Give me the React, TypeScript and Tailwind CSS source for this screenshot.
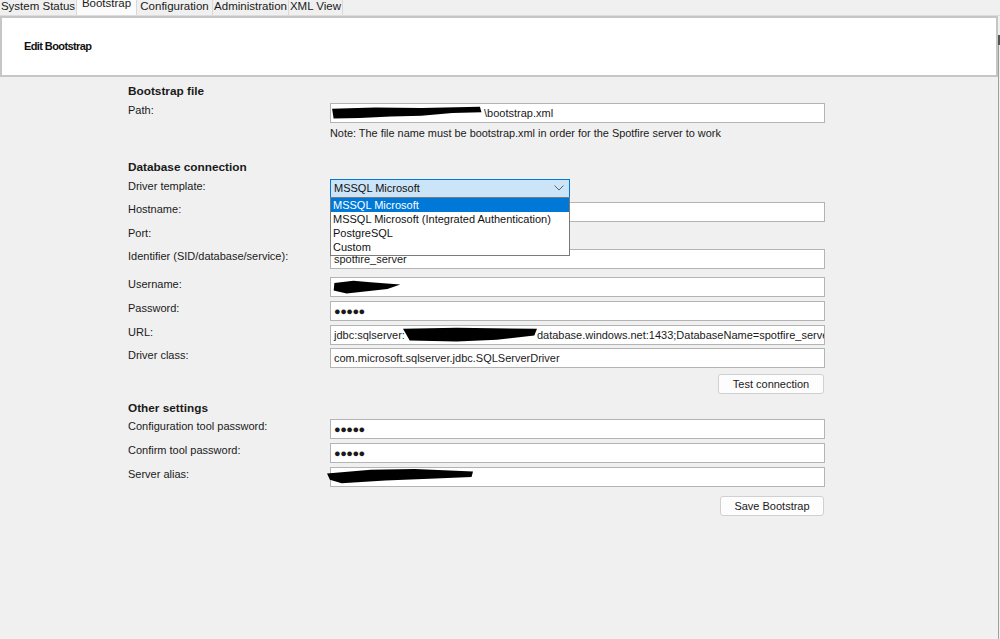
import React from "react";

const font = { fontFamily: '"Liberation Sans", Arial, sans-serif' };

function Scribble({ className, d }: { className: string; d: string }) {
  return (
    <svg className={"absolute pointer-events-none " + className} viewBox="0 0 100 20" preserveAspectRatio="none">
      <path d={d} fill="#000" />
    </svg>
  );
}

function Label({ children }: { children: React.ReactNode }) {
  return <div className="w-[202px] shrink-0 text-[11px] leading-[14px] text-[#1a1a1a] whitespace-nowrap">{children}</div>;
}

function Input({ children, w = "w-[495px]", className = "" }: { children?: React.ReactNode; w?: string; className?: string }) {
  return (
    <div className={"relative h-[20px] bg-white border border-[#b4b4b4] overflow-hidden whitespace-nowrap text-[11px] leading-[18px] pl-[3px] text-[#1a1a1a] " + w + " " + className}>
      {children}
    </div>
  );
}

function Dots() {
  return <span className="text-[11px] font-bold tracking-[-0.5px]">●●●●●</span>;
}

function Row({ label, mt, children }: { label: string; mt: string; children?: React.ReactNode }) {
  return (
    <div className={"flex items-start " + mt}>
      <Label>{label}</Label>
      {children}
    </div>
  );
}

function Header({ children, mt }: { children: React.ReactNode; mt: string }) {
  return <div className={"text-[11.8px] font-bold leading-[16px] text-[#1a1a1a] " + mt}>{children}</div>;
}

function Button({ children, w }: { children: React.ReactNode; w: string }) {
  return (
    <div className={"h-[20px] bg-[#fdfdfd] border border-[#d0d0d0] rounded-[3px] text-[11px] leading-[18px] text-center text-[#1a1a1a] " + w}>
      {children}
    </div>
  );
}

export default function App() {
  const tabs = [
    { name: "System Status", w: "w-[77px]" },
    { name: "Bootstrap", w: "w-[60px]", sel: true },
    { name: "Configuration", w: "w-[76px]" },
    { name: "Administration", w: "w-[76px]" },
    { name: "XML View", w: "w-[54px]" },
  ];
  return (
    <div className="relative w-[1000px] h-[639px] bg-[#f0f0f0] overflow-hidden" style={font}>
      {/* Tabs */}
      <div className="flex h-[16px] overflow-hidden border-b border-[#dcdcdc]">
        {tabs.map((t) => (
          <div
            key={t.name}
            className={
              "shrink-0 h-[16px] border-r border-[#d9d9d9] whitespace-nowrap text-center text-[11.5px] text-[#1a1a1a] overflow-hidden " +
              t.w +
              (t.sel ? " bg-[#fbfbfb]" : " bg-[#f0f0f0]")
            }
          >
            <div className={"leading-[14px] " + (t.sel ? "-mt-[4px]" : "-mt-[1px]")}>{t.name}</div>
          </div>
        ))}
      </div>
      {/* Panel */}
      <div className="w-[998px] h-[61px] bg-white border-2 border-[#c6c6c6] flex items-center pl-[22px]">
        <div className="text-[11px] font-bold tracking-[-0.6px] text-[#111] mt-[-1px]">Edit Bootstrap</div>
      </div>
      <div className="absolute right-[1px] top-[35px] w-[1px] h-[604px] bg-[#a0a0a0]" />
      <div className="absolute right-[0px] top-[35px] w-[2px] h-[10px] bg-[#555]" />

      {/* Form */}
      <div className="ml-[128px] flex flex-col">
        <Header mt="mt-[6px]">Bootstrap file</Header>
        <Row label="Path:" mt="mt-[4px]">
          <Input>
            <span className="ml-[150px]">\bootstrap.xml</span>
            <Scribble className="left-[-2px] top-[2px] w-[154px] h-[14px]" d="M2 4 L30 2 L60 3 L98 1 L99 9 L80 10 L60 14 L40 15 L20 17 L3 18 Z" />
          </Input>
        </Row>
        <div className="ml-[202px] mt-[3px] text-[10.9px] leading-[14px] text-[#1a1a1a] whitespace-nowrap">
          Note: The file name must be bootstrap.xml in order for the Spotfire server to work
        </div>
        <Header mt="mt-[19px]">Database connection</Header>
        <Row label="Driver template:" mt="mt-[4px]">
          <div className="relative w-[240px] h-[19px] bg-[#cce4f7] border border-[#0078d7] text-[11px] leading-[17px] pl-[3px] text-[#111]">
            MSSQL Microsoft
            <svg className="absolute right-[5px] top-[5px]" width="10" height="6" viewBox="0 0 10 6">
              <path d="M0.5 0.5 L5 5 L9.5 0.5" stroke="#606060" strokeWidth="1" fill="none" />
            </svg>
          </div>
        </Row>
        <Row label="Hostname:" mt="mt-[4px]">
          <Input />
        </Row>
        <Row label="Port:" mt="mt-[4px]">
          <Input w="w-[200px]" />
        </Row>
        <Row label="Identifier (SID/database/service):" mt="mt-[3px]">
          <Input>spotfire_server</Input>
        </Row>
        <Row label="Username:" mt="mt-[8px]">
          <Input>
            <Scribble className="left-[2px] top-[2px] w-[68px] h-[15px]" d="M2 4 L30 1 L55 3 L99 6 L80 12 L50 15 L20 18 L1 14 Z" />
          </Input>
        </Row>
        <Row label="Password:" mt="mt-[4px]">
          <Input>
            <Dots />
          </Input>
        </Row>
        <Row label="URL:" mt="mt-[4px]">
          <Input>
            <span>jdbc:sqlserver:</span>
            <span className="inline-block w-[132px]" />
            <span>database.windows.net:1433;DatabaseName=spotfire_server</span>
            <Scribble className="left-[72px] top-[1px] w-[134px] h-[17px]" d="M0 2 L40 1 L100 2 L98 10 L70 15 L40 17 L5 16 Z" />
          </Input>
        </Row>
        <Row label="Driver class:" mt="mt-[3px]">
          <Input>com.microsoft.sqlserver.jdbc.SQLServerDriver</Input>
        </Row>
        <div className="ml-[590px] mt-[6px]">
          <Button w="w-[106px]">Test connection</Button>
        </div>
        <Header mt="mt-[6px]">Other settings</Header>
        <Row label="Configuration tool password:" mt="mt-[3px]">
          <Input>
            <Dots />
          </Input>
        </Row>
        <Row label="Confirm tool password:" mt="mt-[4px]">
          <Input>
            <Dots />
          </Input>
        </Row>
        <Row label="Server alias:" mt="mt-[4px]">
          <div className="relative">
            <Input />
            <Scribble className="left-[-3px] top-[1px] w-[146px] h-[18px]" d="M0 6 L30 2 L60 1 L100 4 L99 10 L70 12 L40 14 L10 17 L2 13 Z" />
          </div>
        </Row>
        <div className="ml-[592px] mt-[9px]">
          <Button w="w-[104px]">Save Bootstrap</Button>
        </div>
      </div>

      {/* Open dropdown list */}
      <div className="absolute left-[330px] top-[197px] w-[240px] h-[59px] bg-white border border-[#7a7a7a] text-[11px] leading-[14px] text-[#111] whitespace-nowrap">
        <div className="bg-[#0078d7] text-white pl-[2px] h-[14px]">MSSQL Microsoft</div>
        <div className="pl-[2px] h-[14px]">MSSQL Microsoft (Integrated Authentication)</div>
        <div className="pl-[2px] h-[14px]">PostgreSQL</div>
        <div className="pl-[2px] h-[14px]">Custom</div>
      </div>
    </div>
  );
}
